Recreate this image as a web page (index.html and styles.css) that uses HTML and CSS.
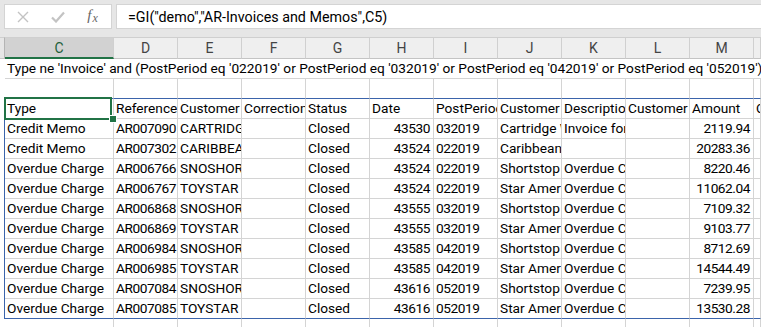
FILE: index.html
```html
<!DOCTYPE html>
<html>
<head>
<meta charset="utf-8">
<link rel="stylesheet" href="styles.css">
</head>
<body>
<div class="formula-bar">
  <div class="fx-box">
    <span class="slot">
      <svg width="12" height="12" viewBox="0 0 12 12"><path d="M1 1 L11 11 M11 1 L1 11" stroke="#c3c3c3" stroke-width="1.4" fill="none"/></svg>
    </span>
    <span class="slot">
      <svg width="14" height="12" viewBox="0 0 14 12"><path d="M1 6.5 L5 10.5 L13 1.5" stroke="#c3c3c3" stroke-width="2.2" fill="none"/></svg>
    </span>
    <span class="slot fx"><i>f</i><i class="x">x</i></span>
  </div>
  <div class="formula-input">=GI("demo","AR-Invoices and Memos",C5)</div>
</div>

<div class="sheet">
  <div class="row head">
    <div class="c rh"></div>
    <div class="c h sel">C</div><div class="c h">D</div><div class="c h">E</div><div class="c h">F</div><div class="c h">G</div><div class="c h">H</div><div class="c h">I</div><div class="c h">J</div><div class="c h">K</div><div class="c h">L</div><div class="c h">M</div><div class="c h"></div>
  </div>
  <div class="row">
    <div class="c rh"></div>
    <div class="c span">Type ne 'Invoice' and (PostPeriod eq '022019' or PostPeriod eq '032019' or PostPeriod eq '042019' or PostPeriod eq '052019')</div>
  </div>
  <div class="row above">
    <div class="c rh"></div>
    <div class="c"></div><div class="c"></div><div class="c"></div><div class="c"></div><div class="c"></div><div class="c"></div><div class="c"></div><div class="c"></div><div class="c"></div><div class="c"></div><div class="c"></div><div class="c"></div>
  </div>
  <div class="row tbl">
    <div class="c rh"></div>
    <div class="c active">Type<span class="handle"></span></div><div class="c">Reference</div><div class="c">Customer</div><div class="c">Correction</div><div class="c">Status</div><div class="c">Date</div><div class="c">PostPeriod</div><div class="c">Customer</div><div class="c">Description</div><div class="c">Customer</div><div class="c">Amount</div><div class="c">Currency</div>
  </div>
  <div class="row tbl">
    <div class="c rh"></div>
    <div class="c">Credit Memo</div><div class="c id">AR007090</div><div class="c">CARTRIDGE</div><div class="c"></div><div class="c">Closed</div><div class="c num">43530</div><div class="c id">032019</div><div class="c">Cartridge World</div><div class="c">Invoice for</div><div class="c"></div><div class="c num">2119.94</div><div class="c"></div>
  </div>
  <div class="row tbl">
    <div class="c rh"></div>
    <div class="c">Credit Memo</div><div class="c id">AR007302</div><div class="c">CARIBBEAN</div><div class="c"></div><div class="c">Closed</div><div class="c num">43524</div><div class="c id">022019</div><div class="c">Caribbean Cruises</div><div class="c"></div><div class="c"></div><div class="c num">20283.36</div><div class="c"></div>
  </div>
  <div class="row tbl">
    <div class="c rh"></div>
    <div class="c">Overdue Charge</div><div class="c id">AR006766</div><div class="c">SNOSHORE</div><div class="c"></div><div class="c">Closed</div><div class="c num">43524</div><div class="c id">022019</div><div class="c">Shortstop Sports</div><div class="c">Overdue Charge</div><div class="c"></div><div class="c num">8220.46</div><div class="c"></div>
  </div>
  <div class="row tbl">
    <div class="c rh"></div>
    <div class="c">Overdue Charge</div><div class="c id">AR006767</div><div class="c">TOYSTAR</div><div class="c"></div><div class="c">Closed</div><div class="c num">43524</div><div class="c id">022019</div><div class="c">Star America</div><div class="c">Overdue Charge</div><div class="c"></div><div class="c num">11062.04</div><div class="c"></div>
  </div>
  <div class="row tbl">
    <div class="c rh"></div>
    <div class="c">Overdue Charge</div><div class="c id">AR006868</div><div class="c">SNOSHORE</div><div class="c"></div><div class="c">Closed</div><div class="c num">43555</div><div class="c id">032019</div><div class="c">Shortstop Sports</div><div class="c">Overdue Charge</div><div class="c"></div><div class="c num">7109.32</div><div class="c"></div>
  </div>
  <div class="row tbl">
    <div class="c rh"></div>
    <div class="c">Overdue Charge</div><div class="c id">AR006869</div><div class="c">TOYSTAR</div><div class="c"></div><div class="c">Closed</div><div class="c num">43555</div><div class="c id">032019</div><div class="c">Star America</div><div class="c">Overdue Charge</div><div class="c"></div><div class="c num">9103.77</div><div class="c"></div>
  </div>
  <div class="row tbl">
    <div class="c rh"></div>
    <div class="c">Overdue Charge</div><div class="c id">AR006984</div><div class="c">SNOSHORE</div><div class="c"></div><div class="c">Closed</div><div class="c num">43585</div><div class="c id">042019</div><div class="c">Shortstop Sports</div><div class="c">Overdue Charge</div><div class="c"></div><div class="c num">8712.69</div><div class="c"></div>
  </div>
  <div class="row tbl">
    <div class="c rh"></div>
    <div class="c">Overdue Charge</div><div class="c id">AR006985</div><div class="c">TOYSTAR</div><div class="c"></div><div class="c">Closed</div><div class="c num">43585</div><div class="c id">042019</div><div class="c">Star America</div><div class="c">Overdue Charge</div><div class="c"></div><div class="c num">14544.49</div><div class="c"></div>
  </div>
  <div class="row tbl">
    <div class="c rh"></div>
    <div class="c">Overdue Charge</div><div class="c id">AR007084</div><div class="c">SNOSHORE</div><div class="c"></div><div class="c">Closed</div><div class="c num">43616</div><div class="c id">052019</div><div class="c">Shortstop Sports</div><div class="c">Overdue Charge</div><div class="c"></div><div class="c num">7239.95</div><div class="c"></div>
  </div>
  <div class="row tbl last">
    <div class="c rh"></div>
    <div class="c">Overdue Charge</div><div class="c id">AR007085</div><div class="c">TOYSTAR</div><div class="c"></div><div class="c">Closed</div><div class="c num">43616</div><div class="c id">052019</div><div class="c">Star America</div><div class="c">Overdue Charge</div><div class="c"></div><div class="c num">13530.28</div><div class="c"></div>
  </div>
  <div class="row">
    <div class="c rh"></div>
    <div class="c"></div><div class="c"></div><div class="c"></div><div class="c"></div><div class="c"></div><div class="c"></div><div class="c"></div><div class="c"></div><div class="c"></div><div class="c"></div><div class="c"></div><div class="c"></div>
  </div>
</div>
</body>
</html>
```

FILE: styles.css
```css
* { box-sizing: border-box; }
html, body {
  margin: 0;
  padding: 0;
  background: #ffffff;
  overflow: hidden;
  width: 761px;
  height: 327px;
}
body {
  font-family: "Roboto", "Liberation Sans", sans-serif;
  font-size: 13.7px;
  color: #000;
}

.formula-bar {
  height: 37px;
  background: #e6e6e6;
  display: flex;
  align-items: flex-start;
  gap: 4px;
  padding: 4px 0 0 4px;
}
.fx-box {
  width: 108px;
  height: 25px;
  background: #fff;
  border: 1px solid #d4d4d4;
  display: flex;
}
.slot {
  width: 35px;
  display: flex;
  align-items: center;
  justify-content: center;
}
.fx {
  font-family: "Liberation Serif", serif;
  color: #666;
  font-size: 15px;
  line-height: 1;
  padding-bottom: 2px;
}
.fx .x { font-size: 12px; margin-left: 1px; position: relative; top: 2px; }
.formula-input {
  flex: 1;
  height: 25px;
  background: #fff;
  border: 1px solid #d4d4d4;
  border-right: none;
  padding: 0 0 0 11px;
  display: flex;
  align-items: center;
  white-space: nowrap;
  color: #000;
  font-size: 14.3px;
}

.sheet {
  display: grid;
  grid-template-columns: 5px 109px repeat(10, 64px) 1fr;
  grid-template-rows: 22px;
  grid-auto-rows: 20px;
}
.row { display: contents; }
.c {
  border-right: 1px solid #d4d4d4;
  border-bottom: 1px solid #d4d4d4;
  overflow: hidden;
  white-space: nowrap;
  padding: 0 2px 1px 2px;
  display: flex;
  align-items: flex-end;
  line-height: 18px;
}
.c.rh { border-right: none; border-bottom: none; }
.c.num { justify-content: flex-end; padding-right: 3px; letter-spacing: -0.45px; }
.c.id { letter-spacing: -0.45px; }

.head .c {
  background: #efefef;
  border-top: 1px solid #cfcfcf;
  border-right: 1px solid #d0d0d0;
  border-bottom: 1px solid #c4c4c4;
  color: #444;
  justify-content: center;
  align-items: center;
  padding: 0;
  font-size: 14px;
}
.head .c.rh { background: #e6e6e6; border-right: 1px solid #b4b4b4; border-top: 1px solid #cfcfcf; }
.head .c.sel {
  background: #d2d2d2;
  border-bottom: 2px solid #217346;
  color: #1d5f3a;
}

.c.span { grid-column: 2 / -1; border-right: none; }

.above .c:not(.rh) { border-bottom-color: #3b64ab; }
.tbl .c.rh { border-right: 1px solid #3b64ab; }
.last .c:not(.rh) { border-bottom-color: #3b64ab; }

.c.active { position: relative; overflow: visible; }
.c.active::after {
  content: "";
  position: absolute;
  left: -1px;
  top: -2px;
  right: 1px;
  bottom: -2px;
  border: 2px solid #217346;
  pointer-events: none;
}
.handle {
  position: absolute;
  left: 105px;
  top: 17px;
  width: 6px;
  height: 6px;
  background: #217346;
  box-shadow: 0 0 0 1px #fff;
  z-index: 2;
}
```
